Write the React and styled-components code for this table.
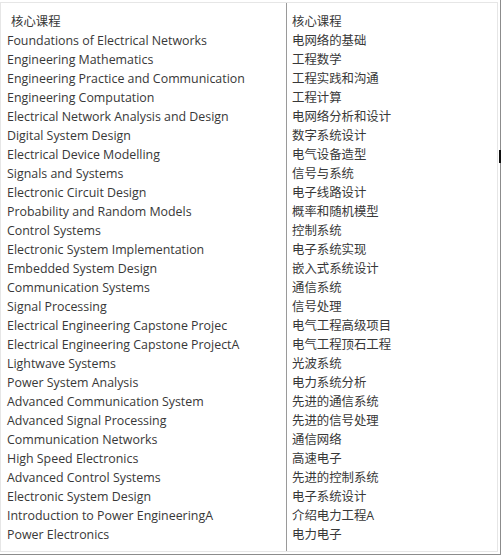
import React from "react";
import styled, { createGlobalStyle } from "styled-components";

const GlobalStyle = createGlobalStyle`
  html, body {
    margin: 0;
    padding: 0;
    background: #ffffff;
  }
  body {
    font-family: "Open Sans", "Noto Sans CJK SC", sans-serif;
  }
`;

const Frame = styled.div`
  position: relative;
  box-sizing: border-box;
  width: 501px;
  height: 555px;
  padding: 2px 2px 2px 0;
  border-right: 1px solid #8c8c8c;
  border-bottom: 1px solid #8c8c8c;
`;

const Table = styled.div`
  box-sizing: border-box;
  height: 100%;
  display: grid;
  grid-template-columns: 285px 1fr;
  border: 1px solid #e6e6e6;
`;

const Column = styled.div`
  display: flex;
  flex-direction: column;
  padding: 9px 0 0 ${({ $right }) => ($right ? "5px" : "6px")};
  border-left: ${({ $right }) => ($right ? "1px solid #9a9a9a" : "none")};
`;

const Row = styled.div`
  height: 19px;
  line-height: 19px;
  font-size: 12.4px;
  color: #383838;
  white-space: nowrap;
  padding-left: ${({ $indent }) => ($indent ? "4px" : "0")};
`;

const Caret = styled.div`
  position: absolute;
  right: -1px;
  top: 150px;
  width: 2px;
  height: 13px;
  background: #111111;
`;

const rows = [
  ["核心课程", "核心课程"],
  ["Foundations of Electrical Networks", "电网络的基础"],
  ["Engineering Mathematics", "工程数学"],
  ["Engineering Practice and Communication", "工程实践和沟通"],
  ["Engineering Computation", "工程计算"],
  ["Electrical Network Analysis and Design", "电网络分析和设计"],
  ["Digital System Design", "数字系统设计"],
  ["Electrical Device Modelling", "电气设备造型"],
  ["Signals and Systems", "信号与系统"],
  ["Electronic Circuit Design", "电子线路设计"],
  ["Probability and Random Models", "概率和随机模型"],
  ["Control Systems", "控制系统"],
  ["Electronic System Implementation", "电子系统实现"],
  ["Embedded System Design", "嵌入式系统设计"],
  ["Communication Systems", "通信系统"],
  ["Signal Processing", "信号处理"],
  ["Electrical Engineering Capstone Projec", "电气工程高级项目"],
  ["Electrical Engineering Capstone ProjectA", "电气工程顶石工程"],
  ["Lightwave Systems", "光波系统"],
  ["Power System Analysis", "电力系统分析"],
  ["Advanced Communication System", "先进的通信系统"],
  ["Advanced Signal Processing", "先进的信号处理"],
  ["Communication Networks", "通信网络"],
  ["High Speed Electronics", "高速电子"],
  ["Advanced Control Systems", "先进的控制系统"],
  ["Electronic System Design", "电子系统设计"],
  ["Introduction to Power EngineeringA", "介绍电力工程A"],
  ["Power Electronics", "电力电子"],
];

const App = () => {
  return (
    <>
      <GlobalStyle />
      <Frame>
        <Table>
          <Column>
            {rows.map(([en], i) => (
              <Row key={i} $indent={i === 0}>
                {en}
              </Row>
            ))}
          </Column>
          <Column $right>
            {rows.map(([, zh], i) => (
              <Row key={i}>{zh}</Row>
            ))}
          </Column>
        </Table>
        <Caret />
      </Frame>
    </>
  );
};

export default App;
